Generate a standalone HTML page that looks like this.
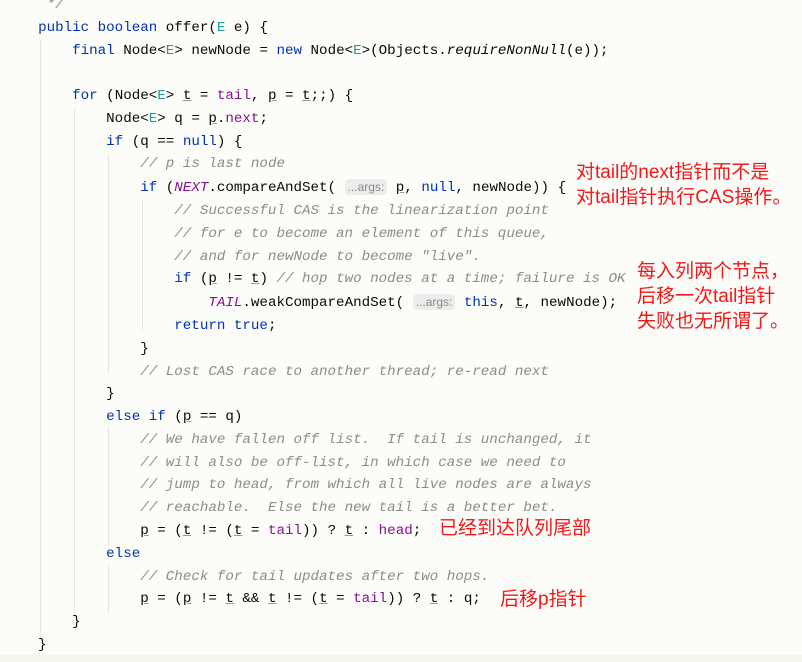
<html><head><style>
body{margin:0;width:802px;height:662px;background:#fcfcf8;overflow:hidden;position:relative;font-family:"Liberation Mono",monospace;}
.code{position:absolute;left:4px;top:-6px;font-size:14.2px;line-height:22.78px;color:#080808;white-space:pre;}
.k{color:#0033b3}.t{color:#1f9a9e}.f{color:#871094}.c{color:#8c8c8c;font-style:italic}.i{color:#871094;font-style:italic}
.h{font-family:"Liberation Sans",sans-serif;font-size:12px;color:#888;background:#ececec;border-radius:4px;padding:1px 3px;}
.u{text-decoration:underline;text-decoration-color:#999}
.g{position:absolute;width:1px;background:#e6e6e0}
.zh{position:absolute;font-family:"Liberation Sans","Noto Sans CJK SC",sans-serif;color:#f21818;font-size:19px;line-height:25px;white-space:nowrap;background:#fcfcf8}
</style></head><body>
<div class="g" style="left:40px;top:40px;height:600px"></div>
<div class="g" style="left:74px;top:108px;height:510px"></div>
<div class="g" style="left:108px;top:154px;height:220px"></div>
<div class="g" style="left:142px;top:200px;height:130px"></div>
<div class="g" style="left:108px;top:426px;height:120px"></div>
<div class="g" style="left:108px;top:564px;height:50px"></div>
<div class="code"><span class="c">     */</span>
    <span class="k">public boolean</span> offer(<span class="t">E</span> e) {
        <span class="k">final</span> Node&lt;<span class="t">E</span>&gt; newNode = <span class="k">new</span> Node&lt;<span class="t">E</span>&gt;(Objects.<i>requireNonNull</i>(e));

        <span class="k">for</span> (Node&lt;<span class="t">E</span>&gt; <span class="u">t</span> = <span class="f">tail</span>, <span class="u">p</span> = <span class="u">t</span>;;) {
            Node&lt;<span class="t">E</span>&gt; q = <span class="u">p</span>.<span class="f">next</span>;
            <span class="k">if</span> (q == <span class="k">null</span>) {
                <span class="c">// p is last node</span>
                <span class="k">if</span> (<span class="i">NEXT</span>.compareAndSet( <span class="h">...args:</span> <span class="u">p</span>, <span class="k">null</span>, newNode)) {
                    <span class="c">// Successful CAS is the linearization point</span>
                    <span class="c">// for e to become an element of this queue,</span>
                    <span class="c">// and for newNode to become "live".</span>
                    <span class="k">if</span> (<span class="u">p</span> != <span class="u">t</span>) <span class="c">// hop two nodes at a time; failure is OK</span>
                        <span class="i">TAIL</span>.weakCompareAndSet( <span class="h">...args:</span> <span class="k">this</span>, <span class="u">t</span>, newNode);
                    <span class="k">return true</span>;
                }
                <span class="c">// Lost CAS race to another thread; re-read next</span>
            }
            <span class="k">else if</span> (<span class="u">p</span> == q)
                <span class="c">// We have fallen off list.  If tail is unchanged, it</span>
                <span class="c">// will also be off-list, in which case we need to</span>
                <span class="c">// jump to head, from which all live nodes are always</span>
                <span class="c">// reachable.  Else the new tail is a better bet.</span>
                <span class="u">p</span> = (<span class="u">t</span> != (<span class="u">t</span> = <span class="f">tail</span>)) ? <span class="u">t</span> : <span class="f">head</span>;
            <span class="k">else</span>
                <span class="c">// Check for tail updates after two hops.</span>
                <span class="u">p</span> = (<span class="u">p</span> != <span class="u">t</span> &amp;&amp; <span class="u">t</span> != (<span class="u">t</span> = <span class="f">tail</span>)) ? <span class="u">t</span> : q;
        }
    }</div>
<div class="zh" style="left:576px;top:160px">对tail的next指针而不是<br>对tail指针执行CAS操作。</div>
<div class="zh" style="left:637px;top:259px">每入列两个节点，<br>后移一次tail指针<br>失败也无所谓了。</div>
<div class="zh" style="left:439px;top:516px;background:none">已经到达队列尾部</div>
<div class="zh" style="left:500px;top:587px;background:none">后移p指针</div>
<div style="position:absolute;left:0;top:655px;width:802px;height:7px;background:#f6f6ee"></div>
</body></html>
